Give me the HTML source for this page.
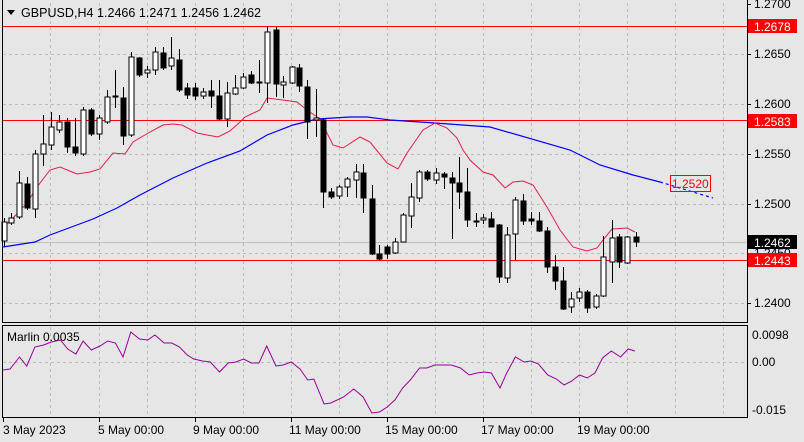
<!DOCTYPE html>
<html><head><meta charset="utf-8"><style>
html,body{margin:0;padding:0;background:#e6e6e6;}
svg{display:block;font-family:"Liberation Sans",sans-serif;}
</style></head><body>
<svg width="804" height="442" viewBox="0 0 804 442" xmlns="http://www.w3.org/2000/svg">
<rect width="804" height="442" fill="#e6e6e6"/>
<g stroke="#bcbcbc" stroke-dasharray="3,3" stroke-width="1" shape-rendering="crispEdges">
<line x1="3" y1="54.5" x2="747" y2="54.5"/><line x1="3" y1="104.5" x2="747" y2="104.5"/><line x1="3" y1="154.5" x2="747" y2="154.5"/><line x1="3" y1="204.5" x2="747" y2="204.5"/><line x1="3" y1="253.5" x2="747" y2="253.5"/><line x1="3" y1="303.5" x2="747" y2="303.5"/>
<line x1="3" y1="362.5" x2="747" y2="362.5"/>
<path d="M50.5 3V322M99.5 3V322M147.5 3V322M195.5 3V322M243.5 3V322M291.5 3V322M339.5 3V322M387.5 3V322M435.5 3V322M483.5 3V322M531.5 3V322M579.5 3V322M627.5 3V322M675.5 3V322M723.5 3V322"/>
<path d="M50.5 327V417M99.5 327V417M147.5 327V417M195.5 327V417M243.5 327V417M291.5 327V417M339.5 327V417M387.5 327V417M435.5 327V417M483.5 327V417M531.5 327V417M579.5 327V417M627.5 327V417M675.5 327V417M723.5 327V417"/>
</g>
<line x1="3" y1="242.5" x2="747" y2="242.5" stroke="#c0c0c0" shape-rendering="crispEdges"/>
<g stroke="#ff0000" shape-rendering="crispEdges">
<line x1="3" y1="26.5" x2="747" y2="26.5"/><line x1="3" y1="120.5" x2="747" y2="120.5"/><line x1="3" y1="260.5" x2="747" y2="260.5"/>
</g>
<polyline fill="none" stroke="#0000ff" stroke-width="1.2" points="3,247 35,242 50,235 93,219 117,208 140,195 173,178 207,163 240,151 267,135 293,125 317,119 350,117 367,117 390,120 435,123 490,127 570,150 600,165 633,175 660,182"/>
<polyline fill="none" stroke="#0000ff" stroke-width="1.2" stroke-dasharray="3,3" points="660,182 713,198"/>
<polyline fill="none" stroke="#e0204a" stroke-width="1" points="3,228 13,218 27,203 37,187 50,170 60,167 77,174 90,172 100,169 113,153 125,154 133,142 150,132 163,125 173,124 182,125 197,133 207,135 218,137 230,131 240,122 245,117 260,110 267,98 283,100 297,102 307,110 320,119 333,145 343,148 360,137 370,142 387,163 398,169 407,153 423,130 435,123 447,128 457,138 463,150 470,160 483,172 493,175 505,188 513,182 523,181 533,185 547,207 560,230 573,247 587,251 597,248 603,240 612,229 627,228 635,232"/>
<g stroke="#000" shape-rendering="crispEdges">
<path d="M4.5 218V246M11.5 213V225M19.5 171V219M27.5 177V210M35.5 150V218M43.5 115V166M51.5 112V150M59.5 115V133M67.5 118V153M75.5 118V156M83.5 107V156M91.5 108V136M99.5 115V140M107.5 90V124M115.5 70V108M123.5 87V145M131.5 52V137M139.5 57V77M147.5 66V78M155.5 47V75M163.5 47V70M171.5 37V70M179.5 49V92M187.5 83V99M195.5 83V100M203.5 88V99M211.5 80V108M219.5 80V120M227.5 82V127M235.5 75V95M243.5 73V89M251.5 71V84M259.5 60V93M267.5 26V103M276.5 27V97M283.5 76V98M292.5 66V84M299.5 64V92M307.5 80V139M316.5 89V137M323.5 118V208M331.5 188V199M339.5 185V199M347.5 177V197M356.5 164V198M363.5 164V213M372.5 185V255M379.5 245V260M387.5 245V259M395.5 238V254M403.5 213V242M411.5 183V228M419.5 170V202M427.5 170V181M436.5 168V184M444.5 172V189M452.5 172V239M459.5 157V209M467.5 168V227M476.5 213V227M483.5 214V224M491.5 212V227M499.5 224V283M507.5 227V283M515.5 197V260M523.5 194V225M531.5 212V225M539.5 212V232M547.5 227V273M555.5 255V290M563.5 267V310M571.5 292V313M579.5 288V302M587.5 290V313M596.5 294V309M603.5 236V297M612.5 220V283M619.5 234V268M627.5 236V264M636.5 232V247"/>
</g>
<g stroke="#000" shape-rendering="crispEdges">
<g fill="#fff">
<rect x="2" y="222" width="5" height="19"/><rect x="9" y="218" width="5" height="5"/><rect x="17" y="183" width="5" height="34"/><rect x="33" y="154" width="5" height="55"/><rect x="41" y="144" width="5" height="10"/><rect x="49" y="127" width="5" height="18"/><rect x="57" y="122" width="5" height="8"/><rect x="81" y="110" width="5" height="44"/><rect x="97" y="118" width="5" height="16"/><rect x="105" y="97" width="5" height="25"/><rect x="129" y="57" width="5" height="78"/><rect x="145" y="70" width="5" height="3"/><rect x="153" y="52" width="5" height="18"/><rect x="169" y="58" width="5" height="8"/><rect x="201" y="92" width="5" height="4"/><rect x="225" y="93" width="5" height="26"/><rect x="233" y="88" width="5" height="6"/><rect x="241" y="77" width="5" height="11"/><rect x="265" y="32" width="5" height="51"/><rect x="281" y="82" width="5" height="3"/><rect x="290" y="67" width="5" height="16"/><rect x="314" y="118" width="5" height="2"/><rect x="337" y="187" width="5" height="9"/><rect x="345" y="179" width="5" height="8"/><rect x="354" y="172" width="5" height="8"/><rect x="393" y="242" width="5" height="11"/><rect x="401" y="215" width="5" height="27"/><rect x="409" y="197" width="5" height="19"/><rect x="417" y="172" width="5" height="26"/><rect x="434" y="173" width="5" height="7"/><rect x="481" y="218" width="5" height="2"/><rect x="505" y="235" width="5" height="43"/><rect x="513" y="200" width="5" height="34"/><rect x="569" y="299" width="5" height="8"/><rect x="577" y="292" width="5" height="6"/><rect x="594" y="296" width="5" height="11"/><rect x="601" y="257" width="5" height="39"/><rect x="610" y="238" width="5" height="24"/><rect x="625" y="237" width="5" height="26"/>
</g>
<g fill="#000">
<rect x="25" y="184" width="5" height="24"/><rect x="65" y="122" width="5" height="25"/><rect x="73" y="147" width="5" height="6"/><rect x="89" y="110" width="5" height="24"/><rect x="113" y="96" width="5" height="1"/><rect x="121" y="98" width="5" height="38"/><rect x="137" y="58" width="5" height="17"/><rect x="161" y="53" width="5" height="15"/><rect x="177" y="60" width="5" height="30"/><rect x="185" y="88" width="5" height="7"/><rect x="193" y="88" width="5" height="8"/><rect x="209" y="91" width="5" height="5"/><rect x="217" y="96" width="5" height="23"/><rect x="249" y="75" width="5" height="8"/><rect x="257" y="82" width="5" height="1"/><rect x="274" y="30" width="5" height="54"/><rect x="297" y="68" width="5" height="18"/><rect x="305" y="87" width="5" height="35"/><rect x="321" y="120" width="5" height="72"/><rect x="329" y="192" width="5" height="5"/><rect x="361" y="173" width="5" height="25"/><rect x="370" y="199" width="5" height="55"/><rect x="377" y="254" width="5" height="5"/><rect x="385" y="247" width="5" height="7"/><rect x="425" y="172" width="5" height="7"/><rect x="442" y="174" width="5" height="3"/><rect x="450" y="178" width="5" height="5"/><rect x="457" y="183" width="5" height="9"/><rect x="465" y="192" width="5" height="28"/><rect x="474" y="221" width="5" height="1"/><rect x="489" y="219" width="5" height="8"/><rect x="497" y="225" width="5" height="52"/><rect x="521" y="201" width="5" height="20"/><rect x="529" y="219" width="5" height="2"/><rect x="537" y="221" width="5" height="10"/><rect x="545" y="231" width="5" height="36"/><rect x="553" y="267" width="5" height="14"/><rect x="561" y="281" width="5" height="28"/><rect x="585" y="292" width="5" height="16"/><rect x="617" y="237" width="5" height="25"/><rect x="634" y="237" width="5" height="5"/>
</g>
</g>
<rect x="670.5" y="175.5" width="40" height="16" fill="none" stroke="#ff0000"/>
<text x="672" y="188" font-size="12" fill="#ff0000">1.2520</text>
<g fill="none" stroke="#000" shape-rendering="crispEdges">
<line x1="2.5" y1="0" x2="2.5" y2="323"/><line x1="747.5" y1="0" x2="747.5" y2="323"/><line x1="2" y1="322.5" x2="748" y2="322.5"/>
<rect x="2.5" y="325.5" width="745" height="92"/>
</g>
<path d="M7 10h8l-4 5z" fill="#000"/>
<text x="21" y="17" font-size="12.5" fill="#000" textLength="240">GBPUSD,H4  1.2466 1.2471 1.2456 1.2462</text>
<g font-size="12" fill="#000">
<text x="754" y="8">1.2700</text><text x="754" y="58">1.2650</text><text x="754" y="108">1.2600</text><text x="754" y="158">1.2550</text><text x="754" y="208">1.2500</text><text x="754" y="257">1.2450</text><text x="754" y="307">1.2400</text>
<text x="752" y="339">0.0098</text><text x="752" y="366">0.00</text><text x="752" y="414">-0.015</text>
</g>
<g stroke="#000" shape-rendering="crispEdges"><path d="M747 4.5h4M747 54.5h4M747 104.5h4M747 154.5h4M747 204.5h4M747 253.5h4M747 303.5h4"/></g>
<rect x="748" y="19" width="49" height="14" fill="#ff0000"/><text x="754" y="31" font-size="12" fill="#fff">1.2678</text>
<rect x="748" y="114" width="49" height="14" fill="#ff0000"/><text x="754" y="126" font-size="12" fill="#fff">1.2583</text>
<rect x="748" y="235" width="49" height="14" fill="#000"/><text x="754" y="247" font-size="12" fill="#fff">1.2462</text>
<rect x="748" y="253" width="49" height="14" fill="#ff0000"/><text x="754" y="265" font-size="12" fill="#fff">1.2443</text>
<text x="7" y="341" font-size="12" fill="#000">Marlin 0.0035</text>
<polyline fill="none" stroke="#990099" stroke-width="1" points="3,370 10,369 19.5,357 26.7,366 34.9,347 43.6,345 51.3,342 60.5,340 67.7,349 75.9,354 83.1,341 91.3,350 100,346 107.7,341 115.4,343 123,357 130.8,332 139.5,339 147.7,340 154.9,335 164.1,343 171.8,343 179.5,347 187.2,355 193.8,359 202.6,361 210.3,362 219.5,372 228.2,363 235.9,362 243.6,359 251.3,363 259,363 266.7,346 275.9,366 283.1,365 291.3,362 300,369 307.7,380 313.8,379 324.1,404 330.8,403 343.6,397 353.8,389 363.1,397 371.8,413 379.5,412 387.2,407 394.9,400 402.6,388 410.3,380 419.5,368 426.7,368 434.9,365 451.3,365 460.5,368 469.2,375 476.9,373 484.6,372 491.3,373 500,388 506.7,373 515.4,357 524.1,362 530.8,361 538.5,364 547.7,375 556.4,379 564.1,385 571.8,381 579.5,375 587.2,378 594.9,373 602.6,358 611.3,351 620.5,357 628.2,349 634.9,351"/>
<g stroke="#000" shape-rendering="crispEdges"><path d="M3.5 418v4M99.5 418v4M195.5 418v4M291.5 418v4M387.5 418v4M483.5 418v4M579.5 418v4"/></g>
<g font-size="12" fill="#000">
<text x="3" y="434">3 May 2023</text><text x="98" y="434">5 May 00:00</text><text x="193" y="434">9 May 00:00</text><text x="289" y="434">11 May 00:00</text><text x="385" y="434">15 May 00:00</text><text x="481" y="434">17 May 00:00</text><text x="577" y="434">19 May 00:00</text>
</g>
</svg>
</body></html>
